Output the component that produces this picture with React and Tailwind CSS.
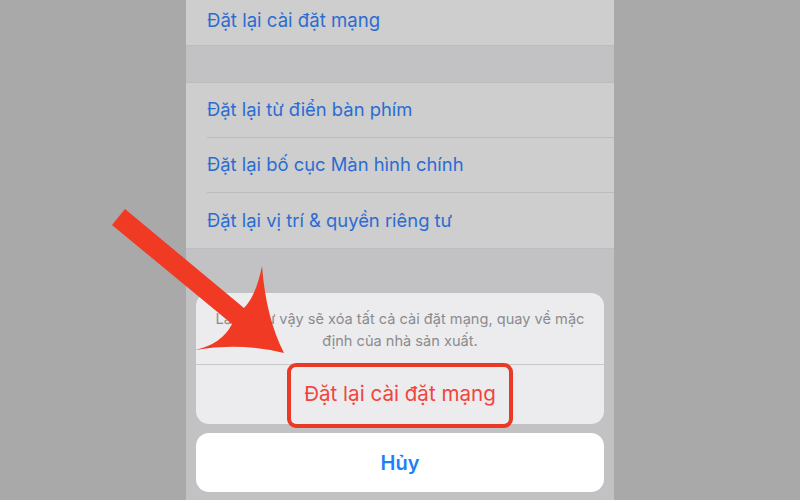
import React from "react";

const rows = [
  "Đặt lại từ điển bàn phím",
  "Đặt lại bố cục Màn hình chính",
  "Đặt lại vị trí & quyền riêng tư",
];

const Arrow = () => (
  <svg
    className="absolute left-0 top-0 pointer-events-none"
    width="800"
    height="500"
    viewBox="0 0 800 500"
  >
    <path
      d="M 125 209 L 244 308 Q 256 296 262 266 Q 266 318 284 353 Q 240 342 195 350 Q 222 344 232 324 L 112 225 Z"
      fill="#f03a24"
    />
  </svg>
);

const App = () => {
  return (
    <div
      className="relative w-[800px] h-[500px] bg-[#a9a9a9] flex justify-center overflow-hidden"
      style={{ fontFamily: "Inter, 'Noto Sans', sans-serif" }}
    >
      <div className="w-[428px] h-full bg-[#c2c2c4] flex flex-col">
        {/* top row */}
        <div className="h-[46px] bg-[#cecece] border-b border-[#bdbdbf] flex items-end pb-[14px] pl-[21px]">
          <span className="text-[18.6px] leading-[22px] text-[#2b6cd3]">
            Đặt lại cài đặt mạng
          </span>
        </div>

        {/* group */}
        <div className="mt-[36px] bg-[#cecece] border-y border-[#bdbdbf]">
          {rows.map((r, i) => (
            <div key={i} className="pl-[21px]">
              <div
                className={
                  "h-[55px] flex items-center " +
                  (i < rows.length - 1 ? "border-b border-[#bcbcbe]" : "")
                }
              >
                <span className="text-[18.4px] text-[#2b6cd3]">{r}</span>
              </div>
            </div>
          ))}
        </div>

        {/* action sheet */}
        <div className="mx-[10px] mt-[44px] rounded-[13px] bg-[#ececee] flex flex-col">
          <div className="h-[72px] border-b border-[#c9c9cc] px-3 pt-[15px] text-center text-[14.6px] leading-[22px] text-[#8b8b8f]">
            Làm như vậy sẽ xóa tất cả cài đặt mạng, quay về mặc định của nhà sản xuất.
          </div>
          <div className="relative h-[59px] flex items-center justify-center">
            <span className="text-[20.6px] text-[#f0453c]">Đặt lại cài đặt mạng</span>
            <div className="absolute left-[91px] top-[-2px] w-[226px] h-[65px] border-[4px] border-[#ea3a26] rounded-[9px]" />
          </div>
        </div>

        <div className="mx-[10px] mt-[9px] h-[59px] rounded-[13px] bg-white flex items-center justify-center">
          <span className="text-[20px] font-semibold text-[#1b7ff5]">Hủy</span>
        </div>
      </div>
      <Arrow />
    </div>
  );
};

export default App;
